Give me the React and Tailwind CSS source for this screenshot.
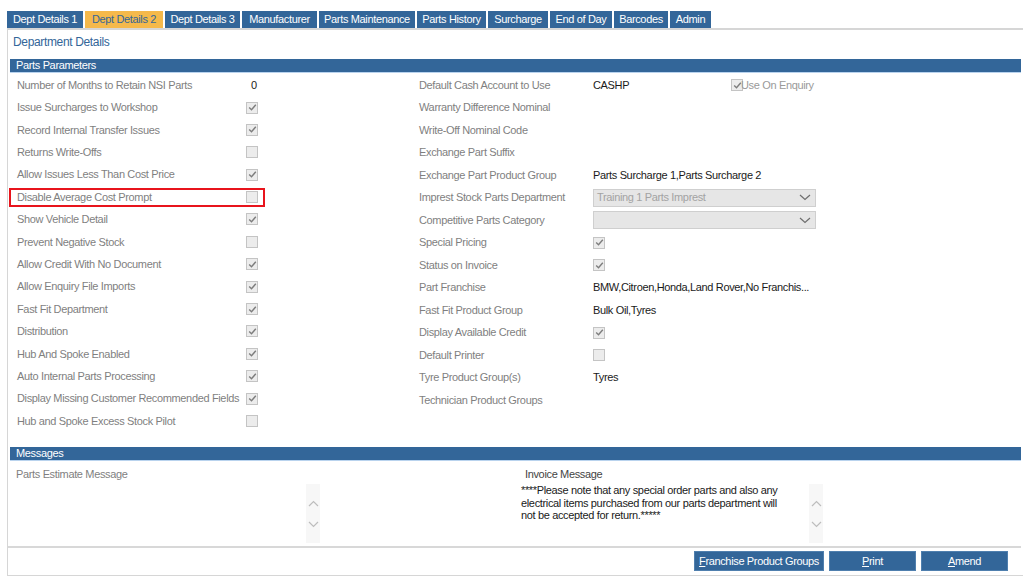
import React from 'react';

const tabs = [
  { name: 'Dept Details 1', w: 'w-[76px]' },
  { name: 'Dept Details 2', w: 'w-[78px]' },
  { name: 'Dept Details 3', w: 'w-[75px]' },
  { name: 'Manufacturer', w: 'w-[75px]' },
  { name: 'Parts Maintenance', w: 'w-[96px]' },
  { name: 'Parts History', w: 'w-[69px]' },
  { name: 'Surcharge', w: 'w-[60px]' },
  { name: 'End of Day', w: 'w-[62px]' },
  { name: 'Barcodes', w: 'w-[54px]' },
  { name: 'Admin', w: 'w-[41px]' },
];

const leftRows = [
  { label: 'Number of Months to Retain NSI Parts', value: '0' },
  { label: 'Issue Surcharges to Workshop', checked: true },
  { label: 'Record Internal Transfer Issues', checked: true },
  { label: 'Returns Write-Offs', checked: false },
  { label: 'Allow Issues Less Than Cost Price', checked: true },
  { label: 'Disable Average Cost Prompt', checked: false, highlight: true },
  { label: 'Show Vehicle Detail', checked: true },
  { label: 'Prevent Negative Stock', checked: false },
  { label: 'Allow Credit With No Document', checked: true },
  { label: 'Allow Enquiry File Imports', checked: true },
  { label: 'Fast Fit Department', checked: true },
  { label: 'Distribution', checked: true },
  { label: 'Hub And Spoke Enabled', checked: true },
  { label: 'Auto Internal Parts Processing', checked: true },
  { label: 'Display Missing Customer Recommended Fields', checked: true },
  { label: 'Hub and Spoke Excess Stock Pilot', checked: false },
];

const rightRows = [
  { label: 'Default Cash Account to Use', value: 'CASHP', enquiry: true },
  { label: 'Warranty Difference Nominal' },
  { label: 'Write-Off Nominal Code' },
  { label: 'Exchange Part Suffix' },
  { label: 'Exchange Part Product Group', value: 'Parts Surcharge 1,Parts Surcharge 2' },
  { label: 'Imprest Stock Parts Department', select: 'Training 1 Parts Imprest' },
  { label: 'Competitive Parts Category', select: '' },
  { label: 'Special Pricing', checked: true },
  { label: 'Status on Invoice', checked: true },
  { label: 'Part Franchise', value: 'BMW,Citroen,Honda,Land Rover,No Franchis...' },
  { label: 'Fast Fit Product Group', value: 'Bulk Oil,Tyres' },
  { label: 'Display Available Credit', checked: true },
  { label: 'Default Printer', checked: false },
  { label: 'Tyre Product Group(s)', value: 'Tyres' },
  { label: 'Technician Product Groups' },
];

const CheckBox = ({ checked }) => (
  <span className="inline-flex items-center justify-center w-[12px] h-[12px] border border-[#c4c4c4] bg-[#ececec]">
    {checked && (
      <svg width="9" height="9" viewBox="0 0 9 9">
        <path d="M1.2 4.6 L3.5 6.8 L7.8 1.8" fill="none" stroke="#7d7d7d" strokeWidth="1.4" />
      </svg>
    )}
  </span>
);

const Chevron = ({ up }) => (
  <svg width="11" height="7" viewBox="0 0 11 7">
    <path d={up ? 'M1 6 L5.5 1.5 L10 6' : 'M1 1 L5.5 5.5 L10 1'} fill="none" stroke="#bdbdbd" strokeWidth="1.2" />
  </svg>
);

const SectionBar = ({ title }) => (
  <div className="mx-[2px] h-[14px] bg-[#336699] border-b border-[#b9d3ee] pl-[6px] text-white text-[11px] leading-[13px]">
    {title}
  </div>
);

const Scroller = () => (
  <div className="w-[14px] h-[59px] bg-[#f7f7f7] flex flex-col items-center justify-center gap-[14px]">
    <Chevron up />
    <Chevron />
  </div>
);

const Btn = ({ first, rest, width }) => (
  <button className={`${width} h-[20px] bg-[#336699] border border-[#4f7fae] text-white text-[11px] whitespace-nowrap`}>
    <span className="underline">{first}</span>
    {rest}
  </button>
);

export default function App() {
  return (
    <div
      className="w-[1023px] h-[577px] bg-white overflow-hidden pt-[11px] tracking-[-0.35px]"
      style={{ fontFamily: '"Liberation Sans", Arial, sans-serif' }}
    >
      {/* tab strip */}
      <div className="flex pl-[7px] gap-[2px]">
        {tabs.map((t, i) => (
          <div
            key={t.name}
            className={`${t.w} h-[17px] text-center whitespace-nowrap text-[11px] leading-[17px] ${
              i === 1 ? 'bg-[#f5b94b] text-[#336699]' : 'bg-[#336699] text-white'
            }`}
          >
            {t.name}
          </div>
        ))}
      </div>

      {/* panel */}
      <div className="ml-[7px] h-[548px] border-t-2 border-l border-b border-[#d6d6d6] flex flex-col">
        <div className="pl-[5px] pt-[3px] h-[29px] text-[#336699] text-[12px]">Department Details</div>

        <SectionBar title="Parts Parameters" />

        <div className="flex pt-[1px] text-[11px]">
          <div className="w-[411px]">
            {leftRows.map((r) => (
              <div key={r.label} className="h-[22.4px] flex items-center">
                <div
                  className={`w-[256px] h-[19px] ml-[1px] pl-[8px] flex items-center ${
                    r.highlight ? 'outline-2 outline-[#e8141c] -outline-offset-2' : ''
                  }`}
                >
                  <span className="w-[229px] text-[#7f7f7f] whitespace-nowrap">{r.label}</span>
                  {r.value !== undefined ? (
                    <span className="pl-[5px] text-[#1a1a1a]">{r.value}</span>
                  ) : (
                    <CheckBox checked={r.checked} />
                  )}
                </div>
              </div>
            ))}
          </div>

          <div className="flex-1">
            {rightRows.map((r) => (
              <div key={r.label} className="h-[22.5px] flex items-center">
                <span className="w-[174px] text-[#7f7f7f] whitespace-nowrap">{r.label}</span>
                {r.select !== undefined ? (
                  <div className="w-[223px] h-[18px] border border-[#cfcfcf] bg-[#e6e6e6] flex items-center justify-between pl-[3px] pr-[4px] text-[#a3a3a3]">
                    <span>{r.select}</span>
                    <svg width="12" height="7" viewBox="0 0 12 7">
                      <path d="M1 1 L6 5.5 L11 1" fill="none" stroke="#6e6e6e" strokeWidth="1.2" />
                    </svg>
                  </div>
                ) : r.checked !== undefined ? (
                  <span className="flex"><CheckBox checked={r.checked} /></span>
                ) : (
                  <span className="w-[138px] text-[#1a1a1a] whitespace-nowrap">{r.value}</span>
                )}
                {r.enquiry && (
                  <span className="flex items-center text-[#9a9a9a]">
                    <CheckBox checked />
                    <span className="-ml-[2px]">Use On Enquiry</span>
                  </span>
                )}
              </div>
            ))}
          </div>
        </div>

        <div className="mt-[15px]">
          <SectionBar title="Messages" />
        </div>

        <div className="flex text-[11px] h-[85px]">
          <div className="w-[506px] pl-[8px] pt-[5px]">
            <div className="text-[#7f7f7f] h-[15px]">Parts Estimate Message</div>
            <div className="flex pt-[3px]">
              <div className="w-[290px]" />
              <Scroller />
            </div>
          </div>
          <div className="flex-1 pl-[7px] pt-[5px]">
            <div className="text-[#444] h-[15px] pl-[4px]">Invoice Message</div>
            <div className="flex pt-[3px]">
              <div className="w-[288px] pr-[16px] text-[#1a1a1a] leading-[12.5px]">
                ****Please note that any special order parts and also any electrical items purchased from our parts department will not be accepted for return.*****
              </div>
              <Scroller />
            </div>
          </div>
        </div>

        <div className="mt-auto mr-[2px] border-t-2 border-[#d8d8d8] h-[29px] flex justify-end items-start gap-[5px] pt-[3px] pr-[13px]">
          <Btn first="F" rest="ranchise Product Groups" width="w-[130px]" />
          <Btn first="P" rest="rint" width="w-[87px]" />
          <Btn first="A" rest="mend" width="w-[87px]" />
        </div>
      </div>
    </div>
  );
}
